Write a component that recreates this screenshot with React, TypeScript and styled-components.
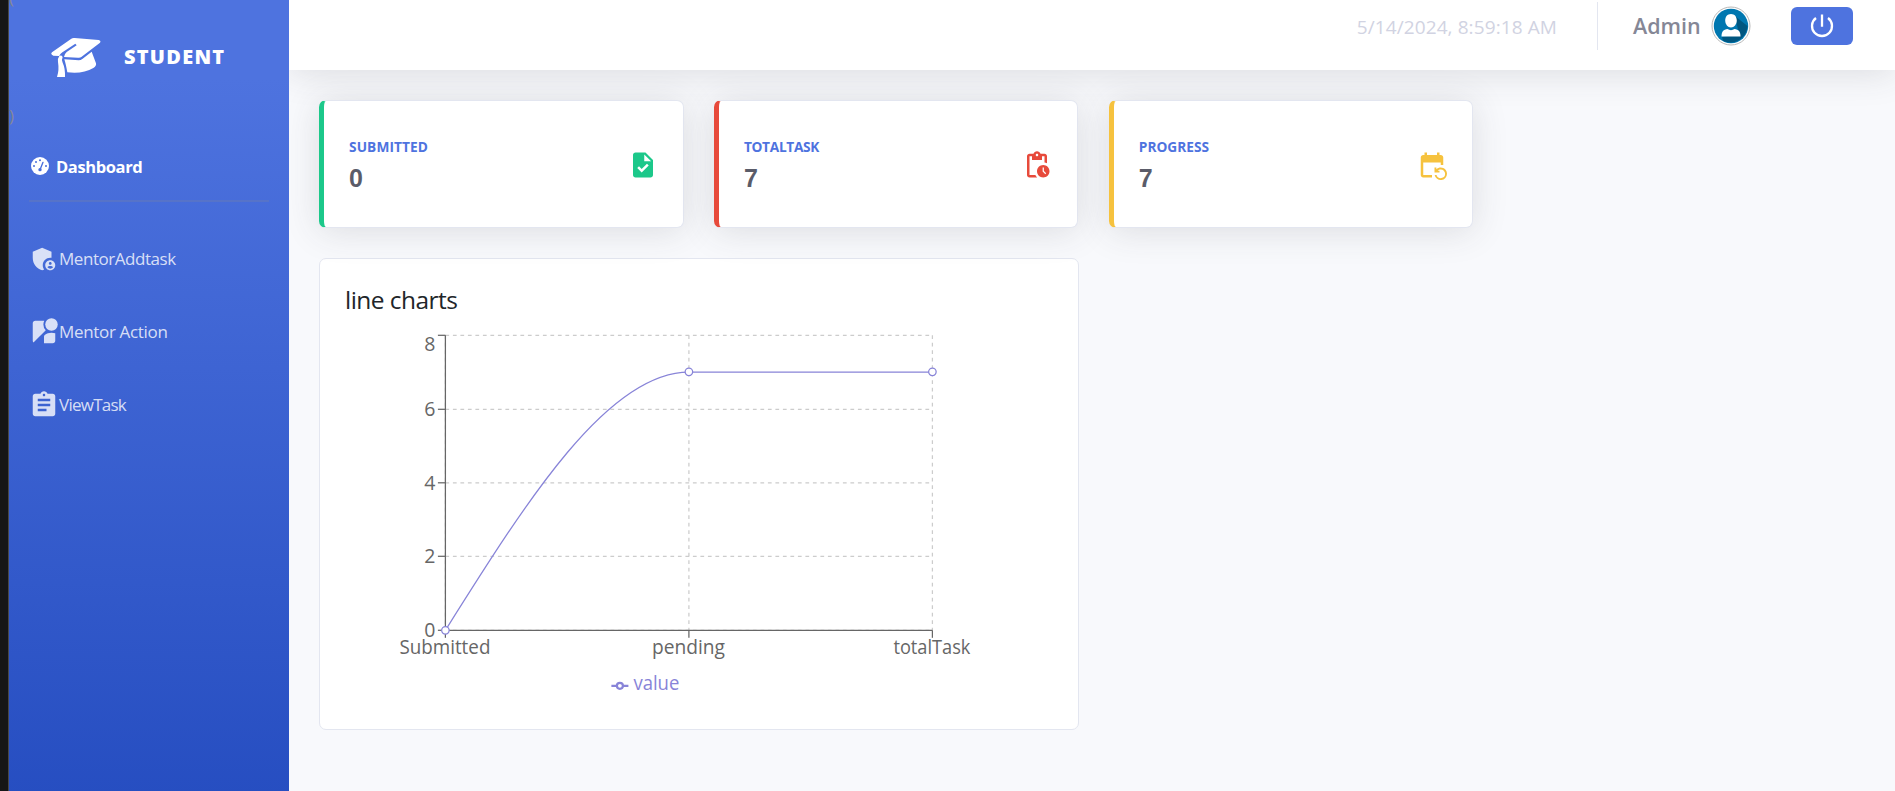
import React from "react";
import styled, { createGlobalStyle } from "styled-components";
import { MdAdminPanelSettings, MdStreetview, MdAssignment, MdTask, MdPendingActions, MdEventRepeat } from "react-icons/md";

const Global = createGlobalStyle`
  * { box-sizing: border-box; }
  body { margin: 0; background: #f8f9fc; overflow: hidden; font-family: "Open Sans", "Noto Sans", sans-serif; }
`;
const Page = styled.div`
  display: flex;
  height: 791px;
  width: 1895px;
  overflow: hidden;
`;
const Edge = styled.div`
  width: 9px;
  flex: none;
  background: #161616;
  border-right: 1px solid #484848;
`;
const Sidebar = styled.aside`
  position: relative;
  width: 280px;
  flex: none;
  overflow: hidden;
  padding: 0 20px;
  display: flex;
  flex-direction: column;
  background: linear-gradient(180deg, #4e73df 10%, #224abe 110%);
  color: #fff;
`;
const Paren = styled.span<{ $top: number }>`
  position: absolute;
  left: 0;
  top: ${(p) => p.$top}px;
  font-size: 17px;
  line-height: 20px;
  color: #858796;
`;
const Brand = styled.div`
  height: 113px;
  padding-left: 21px;
  display: flex;
  align-items: center;
`;
const BrandName = styled.span`
  margin-left: 22px;
  font-size: 20px;
  font-weight: 800;
  letter-spacing: 1.25px;
  white-space: nowrap;
`;
const Active = styled.a`
  display: flex;
  align-items: center;
  height: 40px;
  margin-top: 33px;
  padding-left: 2px;
  gap: 7px;
  font-size: 16.5px;
  font-weight: 700;
  letter-spacing: -0.38px;
`;
const Divider = styled.hr`
  width: 240px;
  height: 2px;
  border: 0;
  margin: 14px 0 20px;
  background: rgba(133, 135, 150, 0.25);
`;
const NavItem = styled.a<{ $spacing: number }>`
  display: flex;
  align-items: center;
  height: 73px;
  font-size: 17px;
  letter-spacing: ${(p) => p.$spacing}px;
  color: rgba(255, 255, 255, 0.8);
  white-space: nowrap;
  svg { width: 30px; height: 30px; flex: none; }
`;
const Main = styled.main`
  flex: 1;
`;
const Header = styled.header`
  height: 70px;
  background: #fff;
  box-shadow: 0 3px 35px rgba(58, 59, 69, 0.15);
  display: flex;
  justify-content: flex-end;
  padding-right: 42px;
`;
const Clock = styled.time`
  margin-top: 14px;
  font-size: 19px;
  line-height: 26px;
  letter-spacing: 0.1px;
  color: #d1d3e2;
`;
const Rule = styled.div`
  width: 1px;
  height: 48px;
  margin: 2px 35px 0 40px;
  background: #e3e6f0;
`;
const User = styled.div`
  display: flex;
  height: 52px;
  align-items: center;
  color: #858796;
`;
const UserName = styled.span`
  width: 78px;
  font-size: 21.5px;
  font-weight: 600;
  line-height: 28px;
`;
const Power = styled.button`
  margin: 7px 0 0 40px;
  width: 62px;
  height: 38px;
  padding: 0;
  border: 0;
  border-radius: 6px;
  background: #4e73df;
  color: #fff;
  display: grid;
  place-items: center;
`;
const Content = styled.div`
  padding: 30px 30px 0;
`;
const Cards = styled.div`
  display: flex;
  gap: 30.3px;
`;
const Card = styled.section<{ $accent: string }>`
  width: 364.6px;
  height: 128px;
  border: 1px solid #e3e6f0;
  border-left: 5px solid ${(p) => p.$accent};
  border-radius: 7px;
  background: #fff;
  box-shadow: 0 3px 35px rgba(58, 59, 69, 0.15);
  padding: 1px 25px 0;
  display: flex;
  align-items: center;
  justify-content: space-between;
  svg { color: ${(p) => p.$accent}; width: 30px; height: 30px; }
`;
const CardTitle = styled.div<{ $spacing: number }>`
  font-size: 13.7px;
  line-height: 20px;
  font-weight: 700;
  color: #4e73df;
  letter-spacing: ${(p) => p.$spacing}px;
  margin-bottom: 6px;
`;
const CardValue = styled.div`
  font-family: "Liberation Sans", sans-serif;
  font-size: 25px;
  line-height: 30px;
  font-weight: 700;
  color: #5a5c69;
`;
const ChartCard = styled.section`
  margin-top: 30px;
  width: 760px;
  height: 472px;
  border: 1px solid #e3e6f0;
  border-radius: 7px;
  background: #fff;
  padding: 23px 25px;
`;
const ChartTitle = styled.h5`
  margin: 0;
  height: 33px;
  font-size: 24.5px;
  line-height: 35px;
  font-weight: 400;
  letter-spacing: -0.55px;
  color: #212529;
`;
const Chart = styled.svg`
  display: block;
  font-size: 19.5px;
`;

const CapIcon = () => (
  <svg width="52" height="42" viewBox="150 108 156 126" fill="#fff">
    <path d="M156 157L214 116Q218 113 224 114L296 120Q304 122 300 128L244 171Q240 174 234 173L192 171Q193 162 200 156L230 136L226 131L193 153Q180 160 178 168L160 167Q150 163 156 157Z" />
    <path d="M178 168Q184 164 188 171Q184 178 188 188Q196 205 195 231L171 231Q178 210 174 186Q172 176 178 168Z" />
    <path d="M193 178L236 181Q242 181 248 176L275 155L288 190Q290 198 280 204Q248 223 202 217Q197 190 193 178Z" />
  </svg>
);

const GaugeIcon = () => (
  <svg width="18" height="18" viewBox="15 16 54 54">
    <circle cx="42" cy="43" r="27" fill="#fff" />
    <g fill="#4a6fdb">
      <circle cx="24" cy="43" r="3" />
      <circle cx="30" cy="31" r="3" />
      <circle cx="42" cy="25.500" r="3" />
      <circle cx="60" cy="43" r="3" />
      <circle cx="42" cy="54" r="5" />
    </g>
    <path d="M42 54L51 32" stroke="#4a6fdb" strokeWidth="4" strokeLinecap="round" />
  </svg>
);

const PowerIcon = () => (
  <svg width="24" height="24" viewBox="0 0 24 24" fill="none" stroke="#fff" strokeWidth="2.300">
    <path d="M12 0.500V12.800M6 4A10 10 0 1 0 18 4" />
  </svg>
);

const Avatar = () => (
  <svg width="40" height="40" viewBox="0 0 40 40">
    <circle cx="20" cy="20" r="19" fill="#fff" stroke="#b8b8b8" strokeWidth="1" />
    <circle cx="20" cy="20" r="17.2" fill="#0077b0" />
    <path d="M24 10L36.5 20A17.2 17.2 0 0 1 12 34.8L11 31L28 28Z" fill="#005680" />
    <path d="M20 8c3.700 0 5.800 2.800 5.800 6.500s-2.600 7-5.800 7-5.800-3.300-5.800-7S16.300 8 20 8ZM10.500 30.500c0-5 2-7 6-7.500 2 1.500 5 1.500 7 0 4 .5 6 2.500 6 7.500Z" fill="#fff" />
  </svg>
);

const yTicks = [
  { v: "8", y: 20, ty: 36 },
  { v: "6", y: 94, ty: 101 },
  { v: "4", y: 167.5, ty: 174.5 },
  { v: "2", y: 241, ty: 248 },
  { v: "0", y: 315, ty: 322 },
];
const xTicks = [
  { name: "Submitted", x: 101, y: 315, w: 91 },
  { name: "pending", x: 344.5, y: 56.5, w: 73 },
  { name: "totalTask", x: 588, y: 56.5, w: 77 },
];

const LineChart = () => (
  <Chart width="700" height="385" viewBox="0.6 -0.3 700 385">
    <g stroke="#ccc" strokeWidth="1.25" strokeDasharray="3.75 3.75">
      {yTicks.map((t) => <line key={t.v} x1="101" x2="588" y1={t.y} y2={t.y} />)}
      {xTicks.map((t) => <line key={t.name} x1={t.x} x2={t.x} y1="20" y2="315" />)}
    </g>
    <g stroke="#666" strokeWidth="1.25">
      <line x1="101" x2="588" y1="315" y2="315" />
      <line x1="101" x2="101" y1="20" y2="315" />
      {yTicks.map((t) => <line key={t.v} x1="93.500" x2="101" y1={t.y} y2={t.y} />)}
      {xTicks.map((t) => <line key={t.name} x1={t.x} x2={t.x} y1="315" y2="322.500" />)}
    </g>
    <g fill="#666">
      {yTicks.map((t) => <text key={t.v} x="91" y={t.ty} textAnchor="end">{t.v}</text>)}
      {xTicks.map((t) => (
        <text key={t.name} x={t.x - 0.5} y="339" textAnchor="middle" textLength={t.w} lengthAdjust="spacingAndGlyphs">{t.name}</text>
      ))}
    </g>
    <path d="M101 315C182.200 185.800 263.300 56.800 344.500 56.800L588 56.800" fill="none" stroke="#8884d8" strokeWidth="1.25" />
    {xTicks.map((t) => <circle key={t.name} cx={t.x} cy={t.y} r="3.750" fill="#fff" stroke="#8884d8" strokeWidth="1.250" />)}
    <g stroke="#8884d8" strokeWidth="2.200" fill="none">
      <path d="M267 370.500h5.500M278.500 370.500h5.500" />
      <circle cx="275.500" cy="370.500" r="3" />
    </g>
    <text x="289" y="375" fill="#8884d8" textLength="46" lengthAdjust="spacingAndGlyphs">value</text>
  </Chart>
);

const nav = [
  { label: "MentorAddtask", spacing: -0.46, Icon: MdAdminPanelSettings },
  { label: "Mentor Action", spacing: -0.33, Icon: MdStreetview },
  { label: "ViewTask", spacing: -0.75, Icon: MdAssignment },
];
const stats = [
  { title: "SUBMITTED", value: 0, accent: "#1cc88a", spacing: 0.1, Icon: MdTask },
  { title: "TOTALTASK", value: 7, accent: "#e74a3b", spacing: -0.3, Icon: MdPendingActions },
  { title: "PROGRESS", value: 7, accent: "#f6c23e", spacing: 0, Icon: MdEventRepeat },
];

export default function App() {
  return (
    <>
      <Global />
      <Page>
        <Edge />
        <Sidebar>
          <Paren $top={-12}>(</Paren>
          <Paren $top={106}>)</Paren>
          <Brand>
            <CapIcon />
            <BrandName>STUDENT</BrandName>
          </Brand>
          <Active><GaugeIcon />Dashboard</Active>
          <Divider />
          {nav.map(({ label, spacing, Icon }) => (
            <NavItem key={label} $spacing={spacing}><Icon />{label}</NavItem>
          ))}
        </Sidebar>
        <Main>
          <Header>
            <Clock>5/14/2024, 8:59:18 AM</Clock>
            <Rule />
            <User><UserName>Admin</UserName><Avatar /></User>
            <Power><PowerIcon /></Power>
          </Header>
          <Content>
            <Cards>
              {stats.map(({ title, value, accent, spacing, Icon }) => (
                <Card key={title} $accent={accent}>
                  <div>
                    <CardTitle $spacing={spacing}>{title}</CardTitle>
                    <CardValue>{value}</CardValue>
                  </div>
                  <Icon />
                </Card>
              ))}
            </Cards>
            <ChartCard>
              <ChartTitle>line charts</ChartTitle>
              <LineChart />
            </ChartCard>
          </Content>
        </Main>
      </Page>
    </>
  );
}
